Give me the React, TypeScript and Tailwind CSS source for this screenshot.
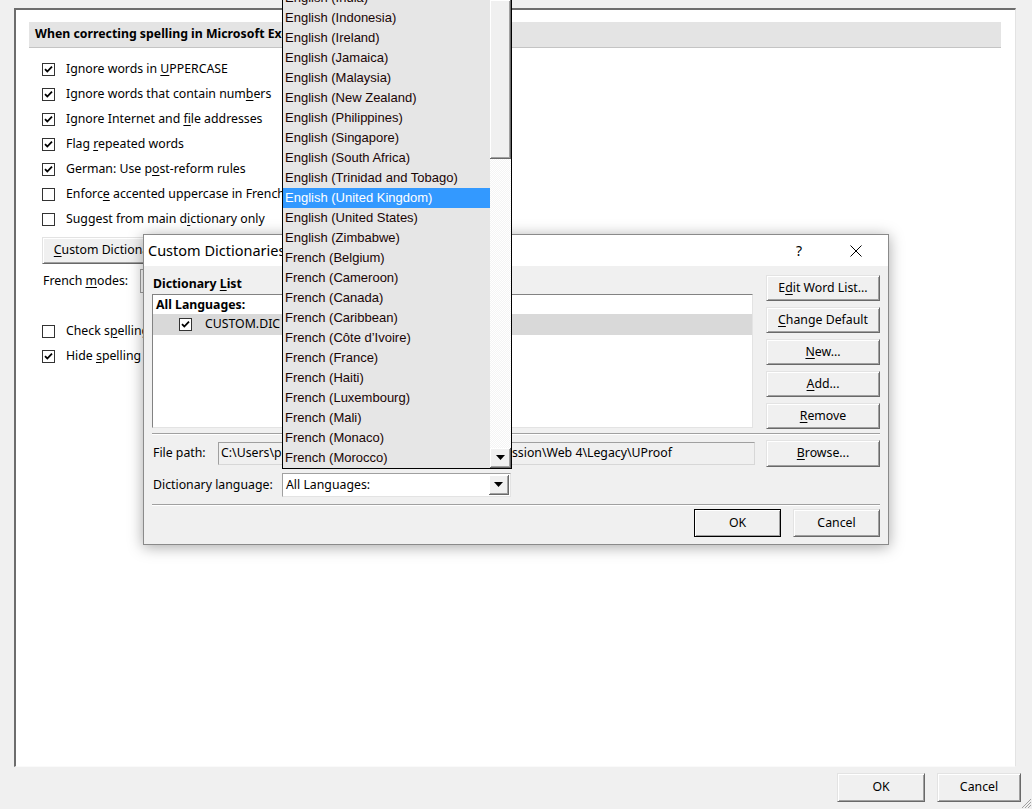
import type { ReactNode } from "react";

const UI = "font-['Segoe_UI','Noto_Sans',sans-serif]";
const LIST = "font-['Tahoma','Liberation_Sans',sans-serif]";

function Check({ on }: { on?: boolean }) {
  return (
    <span className="flex h-[13px] w-[13px] shrink-0 items-center justify-center border border-[#333] bg-white">
      {on && (
        <svg width="9" height="9" viewBox="0 0 9 9">
          <path d="M1 4.2 L3.3 6.5 L8 1.6" fill="none" stroke="#000" strokeWidth="1.8" />
        </svg>
      )}
    </span>
  );
}

function Row({ on, children }: { on?: boolean; children: ReactNode }) {
  return (
    <div className="flex h-[25px] items-center gap-[11px] whitespace-nowrap">
      <Check on={on} />
      <span>{children}</span>
    </div>
  );
}

function K({ children }: { children: ReactNode }) {
  return <span className="underline underline-offset-2">{children}</span>;
}

function Btn({
  children,
  className = "",
  primary,
}: {
  children: ReactNode;
  className?: string;
  primary?: boolean;
}) {
  return (
    <div
      className={`flex items-center justify-center bg-[#f0f0f0] ${
        primary
          ? "border border-black shadow-[inset_1px_1px_0_#fff,inset_-1px_-1px_0_#a0a0a0]"
          : "border border-[#e3e3e3] border-r-[#696969] border-b-[#696969] shadow-[inset_1px_1px_0_#fff,inset_-1px_-1px_0_#a0a0a0]"
      } ${className}`}
    >
      {children}
    </div>
  );
}

function Arrow() {
  return (
    <svg width="9" height="5" viewBox="0 0 9 5">
      <path d="M0 0 H9 L4.5 5 Z" fill="#000" />
    </svg>
  );
}

const languages = [
  "English (India)",
  "English (Indonesia)",
  "English (Ireland)",
  "English (Jamaica)",
  "English (Malaysia)",
  "English (New Zealand)",
  "English (Philippines)",
  "English (Singapore)",
  "English (South Africa)",
  "English (Trinidad and Tobago)",
  "English (United Kingdom)",
  "English (United States)",
  "English (Zimbabwe)",
  "French (Belgium)",
  "French (Cameroon)",
  "French (Canada)",
  "French (Caribbean)",
  "French (Côte d’Ivoire)",
  "French (France)",
  "French (Haiti)",
  "French (Luxembourg)",
  "French (Mali)",
  "French (Monaco)",
  "French (Morocco)",
  "French (Netherlands)",
];

function LanguageList() {
  return (
    <div className="absolute left-[282px] top-0 flex h-[469px] w-[230px] overflow-hidden border-x border-b border-black bg-[#e6e6e6]">
      <div className={`flex-1 ${LIST} text-[13px] text-[#1a0505]`}>
        <div className="-mt-[12px]">
          {languages.map((l) => (
            <div
              key={l}
              className={`flex h-[20px] items-center whitespace-nowrap pl-[2px] ${
                l === "English (United Kingdom)" ? "bg-[#3399ff] text-white" : ""
              }`}
            >
              {l}
            </div>
          ))}
        </div>
      </div>
      <div className="flex w-[21px] flex-col bg-[repeating-conic-gradient(#f4f4f4_0_25%,#fff_0_50%)] bg-[length:2px_2px]">
        <div className="h-[159px] border-r border-b border-[#696969] bg-[#f0f0f0] shadow-[inset_1px_1px_0_#fff,inset_-1px_-1px_0_#a0a0a0]" />
        <div className="flex-1" />
        <div className="flex h-[20px] items-center justify-center border-r border-b border-[#696969] bg-[#f0f0f0] shadow-[inset_1px_1px_0_#fff,inset_-1px_-1px_0_#a0a0a0]">
          <Arrow />
        </div>
      </div>
    </div>
  );
}

function DictionaryDialog() {
  return (
    <div className="absolute left-[143px] top-[234px] flex h-[311px] w-[746px] flex-col border border-[#8a8a8a] bg-[#f0f0f0] shadow-[0_2px_14px_rgba(0,0,0,0.35)]">
      <div className="flex h-[31px] items-center bg-white pl-[4px]">
        <span className="flex-1 text-[14.5px]">Custom Dictionaries</span>
        <span className="w-[20px] text-center text-[14px]">?</span>
        <span className="ml-[37px] mr-[22px] flex w-[20px] justify-center">
          <svg width="12" height="12" viewBox="0 0 12 12">
            <path d="M0.5 0.5 L11.5 11.5 M11.5 0.5 L0.5 11.5" stroke="#000" strokeWidth="1" />
          </svg>
        </span>
      </div>
      <div className="flex flex-1 flex-col px-[8px]">
        <div className="flex gap-[13px]">
          <div className="flex flex-1 flex-col">
            <div className="flex h-[28px] items-end pb-[1px] pl-[1px] font-bold">
              <span>
                Dictionary <K>L</K>ist
              </span>
            </div>
            <div className="h-[134px] border border-[#828282] border-r-[#e3e3e3] border-b-[#e3e3e3] bg-white">
              <div className="pl-[3px] pt-[1px] font-bold leading-[18px]">All Languages:</div>
              <div className="flex h-[21px] items-center bg-[#d9d9d9] pl-[26px]">
                <Check on />
                <span className="ml-[13px]">CUSTOM.DIC</span>
              </div>
            </div>
          </div>
          <div className="flex w-[114px] flex-col gap-[6px] pt-[9px]">
            <Btn className="h-[26px]">
              E<K>d</K>it Word List...
            </Btn>
            <Btn className="h-[26px]">
              <K>C</K>hange Default
            </Btn>
            <Btn className="h-[26px]">
              <K>N</K>ew...
            </Btn>
            <Btn className="h-[26px]">
              <K>A</K>dd...
            </Btn>
            <Btn className="h-[26px]">
              <K>R</K>emove
            </Btn>
          </div>
        </div>
        <div className="mt-[4px] border-t border-[#a0a0a0] border-b border-b-white" />
        <div className="mt-[5px] flex items-center">
          <span className="w-[66px] pl-[1px]">File path:</span>
          <div className="flex h-[23px] w-[537px] items-center overflow-hidden whitespace-nowrap border border-[#d7d7d7] border-t-[#a0a0a0] border-l-[#a0a0a0] bg-[#f0f0f0] pl-[2px]">
            C:\Users\philip\AppData\Roaming\Microsoft\Profession\Web 4\Legacy\UProof
          </div>
          <Btn className="ml-[11px] h-[27px] w-[114px]">
            <K>B</K>rowse...
          </Btn>
        </div>
        <div className="mt-[6px] flex items-center">
          <span className="w-[130px] pl-[1px]">Dictionary language:</span>
          <div className="flex h-[24px] w-[229px] items-center border border-[#a0a0a0] border-r-[#e3e3e3] border-b-[#e3e3e3] bg-white pl-[3px]">
            <span className="flex-1">All Languages:</span>
            <div className="mr-[1px] flex h-[20px] w-[20px] items-center justify-center border-r border-b border-[#696969] bg-[#f0f0f0] shadow-[inset_1px_1px_0_#fff,inset_-1px_-1px_0_#a0a0a0]">
              <Arrow />
            </div>
          </div>
        </div>
        <div className="mt-[7px] border-t border-[#a0a0a0] border-b border-b-white" />
        <div className="mt-[3px] flex justify-end gap-[12px]">
          <Btn primary className="h-[28px] w-[87px]">
            OK
          </Btn>
          <Btn className="h-[28px] w-[87px]">Cancel</Btn>
        </div>
      </div>
    </div>
  );
}

export default function App() {
  return (
    <div className={`relative h-[809px] w-[1032px] overflow-hidden bg-[#f0f0f0] text-[12.3px] text-black ${UI}`}>
      <div className="pl-[14px] pt-[8px]">
        <div className="h-[759px] w-[1002px] border-l-2 border-t-2 border-[#6d6d6d] border-r border-b border-r-[#e3e3e3] border-b-[#fafafa] bg-white">
          <div className="ml-[13px] mt-[12px] flex h-[26px] w-[972px] items-center border-b border-[#c4c4c4] bg-[#e4e4e4] pl-[6px] font-bold">
            When correcting spelling in Microsoft Excel
          </div>
          <div className="ml-[26px] mt-[9px] flex flex-col">
            <Row on>
              Ignore words in <K>U</K>PPERCASE
            </Row>
            <Row on>
              Ignore words that contain num<K>b</K>ers
            </Row>
            <Row on>
              Ignore Internet and <K>f</K>ile addresses
            </Row>
            <Row on>
              Flag <K>r</K>epeated words
            </Row>
            <Row on>
              German: Use p<K>o</K>st-reform rules
            </Row>
            <Row>
              Enforc<K>e</K> accented uppercase in French
            </Row>
            <Row>
              Suggest from main d<K>i</K>ctionary only
            </Row>
            <Btn className="mt-[5px] h-[27px] w-[150px]">
              <K>C</K>ustom Dictionaries...
            </Btn>
            <div className="mt-[3px] flex h-[28px] items-center">
              <span className="w-[98px] pl-[1px]">
                French <K>m</K>odes:
              </span>
              <div className="h-[24px] w-[200px] border border-[#a0a0a0] bg-white" />
            </div>
            <div className="h-[24px]" />
            <Row>
              Check s<K>p</K>elling as you type
            </Row>
            <Row on>
              Hide <K>s</K>pelling errors in this document only
            </Row>
          </div>
        </div>
      </div>
      <div className="mt-[6px] flex justify-end gap-[12px] pr-[11px]">
        <Btn className="h-[29px] w-[88px]">OK</Btn>
        <Btn className="h-[29px] w-[84px]">Cancel</Btn>
      </div>
      <svg className="absolute bottom-0 right-0" width="12" height="12" viewBox="0 0 12 12">
        <path d="M11 2 L2 11 M11 5 L5 11 M11 8 L8 11" stroke="#a0a0a0" strokeWidth="1" />
      </svg>
      <DictionaryDialog />
      <LanguageList />
    </div>
  );
}
